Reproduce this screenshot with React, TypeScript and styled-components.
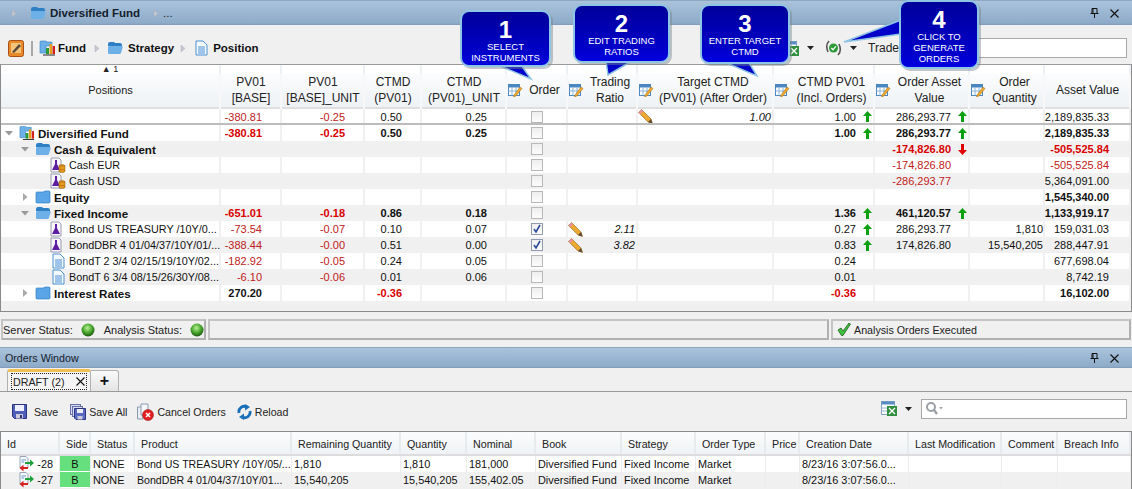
import React from "react";
import styled, { createGlobalStyle } from "styled-components";

const GlobalStyle = createGlobalStyle`
	html, body {
		margin: 0;
		padding: 0;
		background: #f0f0f0;
	}
	body {
		font-family: "Liberation Sans", Arial, sans-serif;
		font-size: 11px;
		color: #111;
	}
`;

const Page = styled.div`
	position: relative;
	width: 1132px;
	height: 489px;
	overflow: hidden;
	display: flex;
	flex-direction: column;
	background: #f0f0f0;
`;

/* ---------- icons ---------- */

const FolderOpen = () => (
	<svg width="16" height="14" viewBox="0 0 16 14">
		<path d="M1 3 Q1 1 3 1 H7 L8 2 H13 Q15 2 15 4 V5 H1Z" fill="#2f7fc4" />
		<path d="M1 12 V6 Q1 5 3 5 H15 Q16 5 15.6 6.5 L14 12 Q13.6 13 12.5 13 H2 Q1 13 1 12Z" fill="#6db0e8" />
	</svg>
);

const FolderClosed = () => (
	<svg width="16" height="14" viewBox="0 0 16 14">
		<path d="M1 3 Q1 2 2 2 H8 L10 1 H14 Q15 1 15 2 V12 Q15 13 14 13 H2 Q1 13 1 12Z" fill="#5aa5e6" stroke="#2f7fc4" strokeWidth="0.7" />
	</svg>
);

const FundIcon = () => (
	<svg width="17" height="16" viewBox="0 0 17 16">
		<path d="M1 2 Q1 1 2 1 H7 L8 2 H13 V6 H7 V13 H1Z" fill="#6db0e8" stroke="#2f7fc4" strokeWidth="0.6" />
		<rect x="7" y="8" width="3" height="6" fill="#2c9a3a" />
		<rect x="10.5" y="4" width="2.5" height="10" fill="#e6a020" />
		<rect x="13.5" y="6" width="2.5" height="8" fill="#d02020" />
		<rect x="4" y="14.5" width="12" height="1" fill="#222" />
	</svg>
);

const DocIcon = () => (
	<svg width="13" height="16" viewBox="0 0 13 16">
		<path d="M1 1 H8 L12 5 V15 H1Z" fill="#f4f9ff" stroke="#4a90d0" />
		<path d="M3 7 H10 M3 9 H10 M3 11 H10 M3 13 H10" stroke="#4a90d0" />
	</svg>
);

const FlaskDoc = ({ coins }: { coins?: boolean }) => (
	<svg width="16" height="16" viewBox="0 0 16 16">
		<path d="M1 1 H9 L11 3 V15 H1Z" fill="#f6f6fb" stroke="#9a9ab0" />
		<path d="M5 3 H7 V7 L10 13 H2 L5 7Z" fill="#5b1fa0" />
		{coins && (
			<g fill="#e89a20" stroke="#8a5a10" strokeWidth="0.5">
				<ellipse cx="12" cy="9" rx="3" ry="1.5" />
				<rect x="9" y="9" width="6" height="5" />
				<ellipse cx="12" cy="14" rx="3" ry="1.5" />
			</g>
		)}
	</svg>
);

const Expander = ({ open }: { open?: boolean }) => (
	<svg width="8" height="8" viewBox="0 0 8 8">
		{open ? <path d="M0 2 H8 L4 6.5Z" fill="#999" /> : <path d="M2 0 V8 L6.5 4Z" fill="#aaa" />}
	</svg>
);

const Chevron = () => (
	<svg width="6" height="9" viewBox="0 0 6 9">
		<path d="M1 1 V8 L5 4.5Z" fill="#c4c8cc" stroke="#aab" strokeWidth="0.4" />
	</svg>
);

const Caret = () => (
	<svg width="7" height="4" viewBox="0 0 7 4">
		<path d="M0 0 H7 L3.5 4Z" fill="#222" />
	</svg>
);

const Pencil = () => (
	<svg width="15" height="15" viewBox="0 0 15 15">
		<path d="M0.5 3.5 L3.5 0.5 L13 10 L14.5 14.5 L10 13Z" fill="#eda832" stroke="#8a6420" strokeWidth="0.6" />
		<path d="M0.5 3.5 L3.5 0.5 L5.2 2.2 L2.2 5.2Z" fill="#ec8f9f" />
		<path d="M13 10 L14.5 14.5 L10 13Z" fill="#5a4a30" />
	</svg>
);

const EditColumn = () => (
	<svg width="15" height="14" viewBox="0 0 15 14">
		<rect x="0.5" y="1.5" width="11" height="11" fill="#fff" stroke="#4a86c0" />
		<rect x="0.5" y="1.5" width="11" height="3" fill="#4a86c0" />
		<path d="M0.5 8 H11.5 M4 4.5 V12.5 M8 4.5 V12.5" stroke="#8ab4da" />
		<path d="M6 12 L12 4 L14 5.5 L8 13 L5.5 14Z" fill="#eda832" stroke="#a06a10" strokeWidth="0.5" />
	</svg>
);

const Arrow = ({ down }: { down?: boolean }) => (
	<svg width="9" height="11" viewBox="0 0 9 11">
		<path
			d={down ? "M3 0 H6 V6 H9 L4.5 11 L0 6 H3Z" : "M4.5 0 L9 5 H6 V11 H3 V5 H0Z"}
			fill={down ? "#e00000" : "#0aa010"}
		/>
	</svg>
);

const ExcelIcon = () => (
	<svg width="16" height="17" viewBox="0 0 16 17">
		<rect x="0.5" y="1.5" width="13" height="13" fill="#fff" stroke="#8aa4c4" />
		<rect x="0.5" y="1.5" width="13" height="3" fill="#5a8cc4" />
		<path d="M1 8 H6 M1 11 H6" stroke="#9ab4d4" />
		<rect x="6" y="6" width="10" height="10" fill="#2f8f3f" />
		<path d="M8 8 L14 14 M14 8 L8 14" stroke="#fff" strokeWidth="1.4" />
	</svg>
);

const SyncCheck = () => (
	<svg width="17" height="16" viewBox="0 0 17 16">
		<path d="M4 1 Q0 5 3 12" fill="none" stroke="#555" strokeWidth="1.6" />
		<path d="M13 15 Q17 11 14 4" fill="none" stroke="#555" strokeWidth="1.6" />
		<circle cx="8.5" cy="8" r="4.5" fill="#2e9a3a" />
		<path d="M6.3 8 L8 9.8 L10.8 6.4" fill="none" stroke="#fff" strokeWidth="1.3" />
	</svg>
);

const Lens = () => (
	<svg width="18" height="13" viewBox="0 0 18 13">
		<circle cx="6" cy="5" r="4" fill="none" stroke="#9aa0a6" strokeWidth="2" />
		<path d="M9 8 L12 12" stroke="#9aa0a6" strokeWidth="2.4" />
		<path d="M14 5 H18 L16 7.5Z" fill="#aaa" />
	</svg>
);

const PaintIcon = () => (
	<svg width="16" height="17" viewBox="0 0 16 17">
		<rect x="0.5" y="0.5" width="15" height="16" rx="2" fill="#e98a2a" stroke="#a8501a" />
		<rect x="3" y="3" width="10" height="10" fill="#f3c37a" />
		<path d="M4 12 L11 4 L13 6 L6 13Z" fill="#5a4a3a" />
	</svg>
);

const LedCircle = () => (
	<svg width="14" height="14" viewBox="0 0 14 14">
		<defs>
			<radialGradient id="led" cx="45%" cy="35%" r="65%">
				<stop offset="0%" stopColor="#b8f09a" />
				<stop offset="55%" stopColor="#4aa82e" />
				<stop offset="100%" stopColor="#1c5a12" />
			</radialGradient>
		</defs>
		<circle cx="7" cy="7" r="6.5" fill="url(#led)" />
	</svg>
);

const CheckMark = () => (
	<svg width="14" height="13" viewBox="0 0 14 13">
		<path d="M1 7 L4 5 L6 8 L12 0 L13.5 1 L6 12.5 L4.5 12.5Z" fill="#3fc23f" stroke="#1c5a1c" strokeWidth="0.8" />
	</svg>
);

const PinIcon = () => (
	<svg width="9" height="10" viewBox="0 0 9 10">
		<path d="M2 0.5 H7 V5.5 H2Z M3 0.5 V5.5 M0.5 5.5 H8.5 M4.5 5.5 V10" fill="none" stroke="#111" />
	</svg>
);

const CloseIcon = () => (
	<svg width="9" height="9" viewBox="0 0 9 9">
		<path d="M0.5 0.5 L8.5 8.5 M8.5 0.5 L0.5 8.5" stroke="#111" strokeWidth="1.1" />
	</svg>
);

const Floppy = () => (
	<svg width="15" height="15" viewBox="0 0 15 15">
		<path d="M0.5 0.5 H14.5 V14.5 H2.5 L0.5 12.5Z" fill="#4f5fb8" stroke="#2c3480" />
		<rect x="3" y="1" width="9" height="6" fill="#eef" />
		<rect x="4" y="10" width="7" height="4.5" fill="#ccd" />
		<rect x="8" y="11" width="2" height="3" fill="#336" />
	</svg>
);

const FloppyStack = () => (
	<svg width="16" height="16" viewBox="0 0 16 16">
		<rect x="0.5" y="0.5" width="10" height="10" fill="#d8dcf0" stroke="#6670a8" />
		<rect x="2.5" y="2.5" width="10" height="10" fill="#d8dcf0" stroke="#6670a8" />
		<path d="M4.5 4.5 H15.5 V15.5 H6 L4.5 14Z" fill="#5a6ac0" stroke="#2c3480" />
		<rect x="7" y="5" width="6" height="4" fill="#eef" />
		<rect x="7.5" y="12" width="5" height="3.5" fill="#ccd" />
	</svg>
);

const CancelDocs = () => (
	<svg width="17" height="18" viewBox="0 0 17 18">
		<path d="M0.5 4 H6 V16 H0.5Z" fill="#e8eef4" stroke="#8a9aac" />
		<path d="M4 1 H11 V12 H4Z" fill="#f4f7fa" stroke="#8a9aac" />
		<circle cx="11" cy="12" r="5.5" fill="#e02020" stroke="#901010" strokeWidth="0.5" />
		<path d="M9 10 L13 14 M13 10 L9 14" stroke="#fff" strokeWidth="1.5" />
	</svg>
);

const ReloadIcon = () => (
	<svg width="15" height="16" viewBox="0 0 15 16">
		<path d="M2 9 A5.5 5.5 0 0 1 10 3" fill="none" stroke="#1a70b8" strokeWidth="2.8" />
		<path d="M8 0 L13 3 L8 6.5Z" fill="#1a70b8" />
		<path d="M13 7 A5.5 5.5 0 0 1 5 13" fill="none" stroke="#1a70b8" strokeWidth="2.8" />
		<path d="M7 9.5 L2 13 L7 16Z" fill="#1a70b8" />
	</svg>
);

const OrderArrows = () => (
	<svg width="15" height="16" viewBox="0 0 15 16">
		<path d="M1 0.5 H7 L9 2.5 V12 H1Z" fill="#f4f7fa" stroke="#9aa6b4" />
		<path d="M2.5 4 H7 M2.5 6 H5" stroke="#6a9ad0" />
		<path d="M6 6 H11 V3.5 L15 7 L11 10.5 V8 H6Z" fill="#1ea03a" />
		<path d="M9 11 H4.5 V8.8 L0.5 12 L4.5 15.5 V13 H9Z" fill="#d82020" />
	</svg>
);

/* ---------- window chrome ---------- */

const TitleBar = styled.div<{ $height: number }>`
	height: ${(p) => p.$height}px;
	flex: none;
	display: flex;
	align-items: center;
	padding: 0 13px 0 5px;
	box-sizing: border-box;
	background: linear-gradient(#aac3dc, #8eabc9 92%, #7c98b6);
	border-top: 1px solid #8ea8c4;
`;

const TitleText = styled.span`
	font-size: 11.5px;
	color: #14202c;
`;

const OrdersTitle = styled(TitleText)`
	font-size: 10.7px;
`;

const TitleName = styled(TitleText)`
	font-weight: bold;
	margin-left: 4px;
`;

const Crumb = styled.span<{ $gap?: number }>`
	display: inline-flex;
	align-items: center;
	margin-left: ${(p) => p.$gap ?? 0}px;
`;

const WindowButtons = styled.div`
	margin-left: auto;
	display: flex;
	align-items: center;
	gap: 11px;
`;

const Toolbar = styled.div<{ $height: number; $top?: number }>`
	height: ${(p) => p.$height}px;
	flex: none;
	display: flex;
	align-items: center;
	padding: ${(p) => p.$top ?? 0}px 5px 0 8px;
	box-sizing: border-box;
	background: #f0f0f0;
`;

const Breadcrumb = styled.span<{ $left: number }>`
	margin-left: ${(p) => p.$left}px;
	font-size: 11.5px;
	font-weight: bold;
	color: #111;
`;

const Divider = styled.span`
	width: 2px;
	height: 15px;
	margin: 0 6px 0 7px;
	background: #a8a8a8;
`;

const ToolRight = styled.div<{ $lift?: number }>`
	margin-left: auto;
	margin-bottom: ${(p) => p.$lift ?? 0}px;
	display: flex;
	align-items: center;
`;

const SearchBox = styled.div<{ $width: number; $left: number }>`
	width: ${(p) => p.$width}px;
	height: 20px;
	margin-left: ${(p) => p.$left}px;
	box-sizing: border-box;
	border: 1px solid #a8a8a8;
	background: #fff;
	display: flex;
	align-items: center;
	padding-left: 3px;
`;

const ToolAction = styled.span<{ $gap: number; $left: number }>`
	display: inline-flex;
	align-items: center;
	gap: ${(p) => p.$gap}px;
	margin-left: ${(p) => p.$left}px;
	font-size: 10.6px;
	color: #222;
`;

const TradeLabel = styled.span`
	margin-left: 11px;
	font-size: 12px;
	color: #222;
`;

/* ---------- positions table ---------- */

const positionColumns = "220px 61px 83px 57px 85px 61px 70px 136px 101px 95px 75px 86px";

const TreeTable = styled.div`
	height: 248px;
	flex: none;
	box-sizing: border-box;
	border: 1px solid #8a8a8a;
	border-top-color: #9a9a9a;
	background: #f0f0f0;
	overflow: hidden;
`;

const GridRow = styled.div<{ $alt?: boolean; $height: number }>`
	display: grid;
	grid-template-columns: ${positionColumns};
	height: ${(p) => p.$height}px;
	background: ${(p) => (p.$alt ? "#f0f0f0" : "#fff")};
`;

const SortCell = styled.div`
	border-right: 2px solid #eef1f4;
	font-size: 9px;
	line-height: 9px;
	text-align: center;
	color: #222;
`;

const HeaderRow = styled(GridRow)`
	background: linear-gradient(#fbfcfd, #eef2f5);
	border-bottom: 2px solid #dfdfdf;
	box-sizing: content-box;
`;

const HeaderCell = styled.div`
	display: flex;
	align-items: center;
	border-right: 2px solid #f8f8f8;
	padding: 0 0 6px 1px;
	font-size: 12px;
	line-height: 16px;
	color: #222;
`;

const HeaderLabel = styled.div`
	flex: 1;
	text-align: center;
	white-space: pre-line;
`;

const PositionsLabel = styled(HeaderLabel)`
	font-size: 11px;
`;

const Cell = styled.div<{ $bold?: boolean; $red?: boolean; $italic?: boolean }>`
	display: flex;
	align-items: center;
	justify-content: flex-end;
	border-right: 2px solid #f0f0f0;
	font-size: 11px;
	font-weight: ${(p) => (p.$bold ? "bold" : "normal")};
	font-style: ${(p) => (p.$italic ? "italic" : "normal")};
	color: ${(p) => (p.$red ? (p.$bold ? "#d80000" : "#c02020") : "#111")};
	white-space: nowrap;
`;

const NumberCell = styled(Cell)`
	padding-right: 18px;
`;

const ArrowSlot = styled.span`
	display: inline-flex;
	justify-content: center;
	width: 12px;
	margin-left: 5px;
`;

const AssetCell = styled(Cell)`
	padding-right: 20px;
`;

const EditCell = styled(Cell)`
	justify-content: space-between;
	padding-right: 1px;
`;

const CheckCell = styled(Cell)`
	justify-content: center;
`;

const TreeCell = styled(Cell)<{ $indent: number }>`
	justify-content: flex-start;
	padding-left: ${(p) => p.$indent}px;
	font-size: ${(p) => (p.$bold ? 11.6 : 10.8)}px;
`;

const TreeExpander = styled.span`
	display: inline-flex;
	width: 14px;
`;

const TreeIconSlot = styled.span`
	display: inline-flex;
	justify-content: center;
	width: 16px;
	margin-right: 3px;
`;

const CheckBox = styled.span<{ $checked?: boolean }>`
	display: inline-flex;
	align-items: center;
	justify-content: center;
	width: 12px;
	height: 12px;
	box-sizing: border-box;
	border: 1px solid ${(p) => (p.$checked ? "#8f9ab0" : "#b8b8b8")};
	background: linear-gradient(#eeeeee, #fdfdfd);
`;

const RowSeparator = styled.div`
	height: 2px;
	margin-top: -1px;
	background: #bcbcbc;
	position: relative;
`;

/* ---------- status bar ---------- */

const StatusBar = styled.div`
	height: 21px;
	margin: 7px 1px 0 1px;
	flex: none;
	display: flex;
	gap: 2px;
`;

const StatusPanel = styled.div<{ $width?: number }>`
	${(p) => (p.$width ? `width: ${p.$width}px;` : "flex: 1;")}
	box-sizing: border-box;
	border: 2px solid #b4b4b4;
	border-color: #c4c4c4 #b0b0b0 #b0b0b0 #c4c4c4;
	display: flex;
	align-items: center;
	font-size: 10.7px;
	white-space: nowrap;
	color: #222;
`;

const StatusText = styled.span<{ $left: number }>`
	margin-left: ${(p) => p.$left}px;
	margin-right: 8px;
	font-size: 11px;
`;

const StatusCheck = styled.span`
	display: inline-flex;
	margin: 0 3px 0 4px;
`;

/* ---------- orders ---------- */

const OrdersHead = styled.div`
	margin-top: 7px;
	flex: none;
`;

const TabStrip = styled.div`
	height: 24px;
	flex: none;
	box-sizing: border-box;
	padding: 1px 0 0 7px;
	display: flex;
	align-items: flex-end;
	border-bottom: 1px solid #9a9a9a;
`;

const DraftTab = styled.div`
	width: 84px;
	height: 22px;
	box-sizing: border-box;
	border: 1px solid #b0b0b0;
	border-top: 3px solid #f0c050;
	border-bottom: none;
	border-radius: 3px 3px 0 0;
	background: #f4f4f4;
	padding: 1px 3px;
`;

const TabFocus = styled.div`
	height: 15px;
	border: 1px dotted #222;
	padding: 0 1px 0 1px;
	display: flex;
	align-items: center;
	justify-content: space-between;
	font-size: 10.7px;
	color: #222;
`;

const AddTab = styled.div`
	width: 28px;
	height: 21px;
	box-sizing: border-box;
	border: 1px solid #b0b0b0;
	border-bottom: none;
	border-left: none;
	border-radius: 0 3px 0 0;
	background: linear-gradient(#fafafa, #e4e4e4);
	display: flex;
	align-items: center;
	justify-content: center;
	font-size: 16px;
	font-weight: bold;
	color: #111;
`;

const orderColumns = "59px 31px 44px 157px 109px 66px 69px 86px 74px 70px 34px 109px 93px 56px 73px";

const OrdersTable = styled.div`
	flex: 1;
	box-sizing: border-box;
	border: 1px solid #8a8a8a;
	border-bottom: none;
	overflow: hidden;
`;

const OrderRow = styled.div<{ $alt?: boolean }>`
	display: grid;
	grid-template-columns: ${orderColumns};
	height: 16px;
	background: ${(p) => (p.$alt ? "#f0f0f0" : "#fff")};
`;

const OrderHeader = styled(OrderRow)`
	height: 22px;
	background: linear-gradient(#fbfcfd, #f0f3f5);
	border-bottom: 2px solid #dcdcdc;
	box-sizing: content-box;
`;

const OrderHeadCell = styled.div`
	display: flex;
	align-items: center;
	padding: 2px 0 0 6px;
	border-right: 2px solid #e8ebee;
	font-size: 10.7px;
	color: #222;
	white-space: nowrap;
`;

const OrderCell = styled.div`
	display: flex;
	align-items: center;
	padding-left: 2px;
	border-right: 1px solid #ececec;
	font-size: 10.9px;
	color: #111;
	white-space: nowrap;
	overflow: hidden;
`;

const ProductCell = styled(OrderCell)`
	font-size: 10.6px;
`;

const IdCell = styled(OrderCell)`
	justify-content: flex-end;
	gap: 3px;
	padding-right: 6px;
`;

const SideCell = styled(OrderCell)`
	justify-content: center;
	padding-left: 0;
	background: #66e07f;
	border-bottom: 1px solid #fff;
`;

/* ---------- callouts ---------- */

const Callout = styled.div<{ $x: number; $y: number; $w: number; $h: number }>`
	position: absolute;
	left: ${(p) => p.$x}px;
	top: ${(p) => p.$y}px;
	width: ${(p) => p.$w}px;
	height: ${(p) => p.$h}px;
	box-sizing: border-box;
	border-radius: 9px;
	border: 2px solid #8ec4e4;
	background: linear-gradient(#00009a, #0000cc 80%, #0000e0);
	box-shadow: 2px 2px 0 rgba(120, 130, 140, 0.45);
	color: #fff;
	text-align: center;
	padding-top: 8px;
	z-index: 3;
`;

const CalloutNumber = styled.div`
	font-size: 24px;
	line-height: 20px;
	font-weight: bold;
`;

const CalloutText = styled.div`
	margin-top: 1px;
	font-size: 9.5px;
	line-height: 11px;
	white-space: pre-line;
`;

const CalloutTail = styled.svg<{ $x: number; $y: number }>`
	position: absolute;
	left: ${(p) => p.$x}px;
	top: ${(p) => p.$y}px;
	z-index: 2;
	overflow: visible;
`;

/* ---------- data ---------- */

type Kind = "fund" | "open" | "closed" | "coins" | "flask" | "doc";

interface Position {
	label: string;
	level: number;
	kind?: Kind;
	bold?: boolean;
	expander?: "open" | "closed";
	pv?: string;
	pvUnit?: string;
	ctmd?: string;
	ctmdUnit?: string;
	checked?: boolean;
	ratio?: string;
	target?: string;
	ctmdPv?: string;
	ctmdArrow?: boolean;
	asset?: string;
	assetArrow?: "up" | "down";
	quantity?: string;
	value?: string;
}

const summary: Position = { label: "", level: 0, pv: "-380.81", pvUnit: "-0.25", ctmd: "0.50", ctmdUnit: "0.25", target: "1.00", ctmdPv: "1.00", ctmdArrow: true, asset: "286,293.77", assetArrow: "up", value: "2,189,835.33" };

const positions: Position[] = [
	{ label: "Diversified Fund", level: 0, kind: "fund", bold: true, expander: "open", pv: "-380.81", pvUnit: "-0.25", ctmd: "0.50", ctmdUnit: "0.25", ctmdPv: "1.00", ctmdArrow: true, asset: "286,293.77", assetArrow: "up", value: "2,189,835.33" },
	{ label: "Cash & Equivalent", level: 1, kind: "open", bold: true, expander: "open", asset: "-174,826.80", assetArrow: "down", value: "-505,525.84" },
	{ label: "Cash EUR", level: 2, kind: "coins", asset: "-174,826.80", value: "-505,525.84" },
	{ label: "Cash USD", level: 2, kind: "coins", asset: "-286,293.77", value: "5,364,091.00" },
	{ label: "Equity", level: 1, kind: "closed", bold: true, expander: "closed", value: "1,545,340.00" },
	{ label: "Fixed Income", level: 1, kind: "open", bold: true, expander: "open", pv: "-651.01", pvUnit: "-0.18", ctmd: "0.86", ctmdUnit: "0.18", ctmdPv: "1.36", ctmdArrow: true, asset: "461,120.57", assetArrow: "up", value: "1,133,919.17" },
	{ label: "Bond US TREASURY /10Y/0...", level: 2, kind: "flask", pv: "-73.54", pvUnit: "-0.07", ctmd: "0.10", ctmdUnit: "0.07", checked: true, ratio: "2.11", ctmdPv: "0.27", ctmdArrow: true, asset: "286,293.77", quantity: "1,810", value: "159,031.03" },
	{ label: "BondDBR 4 01/04/37/10Y/01/...", level: 2, kind: "flask", pv: "-388.44", pvUnit: "-0.00", ctmd: "0.51", ctmdUnit: "0.00", checked: true, ratio: "3.82", ctmdPv: "0.83", ctmdArrow: true, asset: "174,826.80", quantity: "15,540,205", value: "288,447.91" },
	{ label: "BondT 2 3/4 02/15/19/10Y/02...", level: 2, kind: "doc", pv: "-182.92", pvUnit: "-0.05", ctmd: "0.24", ctmdUnit: "0.05", ctmdPv: "0.24", value: "677,698.04" },
	{ label: "BondT 6 3/4 08/15/26/30Y/08...", level: 2, kind: "doc", pv: "-6.10", pvUnit: "-0.06", ctmd: "0.01", ctmdUnit: "0.06", ctmdPv: "0.01", value: "8,742.19" },
	{ label: "Interest Rates", level: 1, kind: "closed", bold: true, expander: "closed", pv: "270.20", ctmd: "-0.36", ctmdPv: "-0.36", value: "16,102.00" },
];

const columnHeads: { label: string; edit?: boolean }[] = [
	{ label: "Positions" },
	{ label: "PV01\n[BASE]" },
	{ label: "PV01\n[BASE]_UNIT" },
	{ label: "CTMD\n(PV01)" },
	{ label: "CTMD\n(PV01)_UNIT" },
	{ label: "Order", edit: true },
	{ label: "Trading\nRatio", edit: true },
	{ label: "Target CTMD\n(PV01) (After Order)", edit: true },
	{ label: "CTMD PV01\n(Incl. Orders)", edit: true },
	{ label: "Order Asset\nValue", edit: true },
	{ label: "Order\nQuantity", edit: true },
	{ label: "Asset Value" },
];

const orderHeads = ["Id", "Side", "Status", "Product", "Remaining Quantity", "Quantity", "Nominal", "Book", "Strategy", "Order Type", "Price", "Creation Date", "Last Modification", "Comment", "Breach Info"];

const orders = [
	["-28", "B", "NONE", "Bond US TREASURY /10Y/05/...", "1,810", "1,810", "181,000", "Diversified Fund", "Fixed Income", "Market", "", "8/23/16 3:07:56.0...", "", "", ""],
	["-27", "B", "NONE", "BondDBR 4 01/04/37/10Y/01...", "15,540,205", "15,540,205", "155,402.05", "Diversified Fund", "Fixed Income", "Market", "", "8/23/16 3:07:56.0...", "", "", ""],
];

const treeIcons: Record<Kind, React.ReactNode> = {
	fund: <FundIcon />,
	open: <FolderOpen />,
	closed: <FolderClosed />,
	coins: <FlaskDoc coins />,
	flask: <FlaskDoc />,
	doc: <DocIcon />,
};

const indents = [4, 20, 49];

const isNegative = (v?: string) => Boolean(v && v.startsWith("-"));

const PositionRow: React.FC<{ row: Position; alt: boolean; top?: boolean }> = ({ row, alt, top }) => (
	<GridRow $alt={alt} $height={top ? 15 : 16}>
		<TreeCell $indent={indents[row.level]} $bold={row.bold}>
			{row.expander && (
				<TreeExpander>
					<Expander open={row.expander === "open"} />
				</TreeExpander>
			)}
			{row.kind && <TreeIconSlot>{treeIcons[row.kind]}</TreeIconSlot>}
			{row.label}
		</TreeCell>
		<NumberCell $bold={row.bold} $red={isNegative(row.pv)}>{row.pv}</NumberCell>
		<NumberCell $bold={row.bold} $red={isNegative(row.pvUnit)}>{row.pvUnit}</NumberCell>
		<NumberCell $bold={row.bold} $red={isNegative(row.ctmd)}>{row.ctmd}</NumberCell>
		<NumberCell $bold={row.bold} $red={isNegative(row.ctmdUnit)}>{row.ctmdUnit}</NumberCell>
		<CheckCell>
			<CheckBox $checked={row.checked}>
				{row.checked && (
					<svg width="10" height="10" viewBox="0 0 10 10">
						<path d="M2 5 L4 8 L8 1" fill="none" stroke="#2c4c9c" strokeWidth="1.6" />
					</svg>
				)}
			</CheckBox>
		</CheckCell>
		<EditCell $italic>
			{row.ratio && <Pencil />}
			{row.ratio}
		</EditCell>
		<EditCell $italic>
			{row.target && <Pencil />}
			{row.target}
		</EditCell>
		<Cell $bold={row.bold} $red={isNegative(row.ctmdPv)}>
			{row.ctmdPv}
			<ArrowSlot>{row.ctmdArrow && <Arrow />}</ArrowSlot>
		</Cell>
		<Cell $bold={row.bold} $red={isNegative(row.asset)}>
			{row.asset}
			<ArrowSlot>{row.assetArrow && <Arrow down={row.assetArrow === "down"} />}</ArrowSlot>
		</Cell>
		<Cell>{row.quantity}</Cell>
		<AssetCell $bold={row.bold} $red={isNegative(row.value)}>{row.value}</AssetCell>
	</GridRow>
);

const App: React.FC = () => (
	<Page>
		<GlobalStyle />

		<TitleBar $height={25}>
			<Crumb $gap={6}><Chevron /></Crumb>
			<Crumb $gap={13}><FolderOpen /></Crumb>
			<TitleName>Diversified Fund</TitleName>
			<Crumb $gap={13}><Chevron /></Crumb>
			<Crumb $gap={4}><TitleText>...</TitleText></Crumb>
			<WindowButtons>
				<PinIcon />
				<CloseIcon />
			</WindowButtons>
		</TitleBar>

		<Toolbar $height={39} $top={7}>
			<PaintIcon />
			<Divider />
			<FundIcon />
			<Breadcrumb $left={2}>Fund</Breadcrumb>
			<Crumb $gap={8}><Chevron /></Crumb>
			<Crumb $gap={7}><FolderOpen /></Crumb>
			<Breadcrumb $left={5}>Strategy</Breadcrumb>
			<Crumb $gap={6}><Chevron /></Crumb>
			<Crumb $gap={9}><DocIcon /></Crumb>
			<Breadcrumb $left={5}>Position</Breadcrumb>
			<ToolRight>
				<ExcelIcon />
				<Crumb $gap={8}><Caret /></Crumb>
				<Crumb $gap={11}><SyncCheck /></Crumb>
				<Crumb $gap={8}><Caret /></Crumb>
				<TradeLabel>Trade</TradeLabel>
				<SearchBox $width={187} $left={41} />
			</ToolRight>
		</Toolbar>

		<TreeTable>
			<GridRow $height={9}>
				{columnHeads.map((c, i) => (
					<SortCell key={c.label}>{i === 0 ? "▲ 1" : ""}</SortCell>
				))}
			</GridRow>
			<HeaderRow $height={33}>
				{columnHeads.map((c) => (
					<HeaderCell key={c.label}>
						{c.edit && <EditColumn />}
						{c.label === "Positions" ? <PositionsLabel>{c.label}</PositionsLabel> : <HeaderLabel>{c.label}</HeaderLabel>}
					</HeaderCell>
				))}
			</HeaderRow>
			<PositionRow top alt={false} row={summary} />
			<RowSeparator />
			{positions.map((p, i) => (
				<PositionRow key={p.label} row={p} alt={i % 2 === 1} />
			))}
		</TreeTable>

		<StatusBar>
			<StatusPanel $width={205}>
				<StatusText $left={0}>Server Status:</StatusText>
				<LedCircle />
				<StatusText $left={9}>Analysis Status:</StatusText>
				<LedCircle />
			</StatusPanel>
			<StatusPanel />
			<StatusPanel $width={300}>
				<StatusCheck><CheckMark /></StatusCheck>
				Analysis Orders Executed
			</StatusPanel>
		</StatusBar>

		<OrdersHead>
			<TitleBar $height={21}>
				<OrdersTitle>Orders Window</OrdersTitle>
				<WindowButtons>
					<PinIcon />
					<CloseIcon />
				</WindowButtons>
			</TitleBar>
		</OrdersHead>

		<TabStrip>
			<DraftTab>
				<TabFocus>
					DRAFT (2)
					<CloseIcon />
				</TabFocus>
			</DraftTab>
			<AddTab>+</AddTab>
		</TabStrip>

		<Toolbar $height={39}>
			<ToolAction $gap={7} $left={4}><Floppy />Save</ToolAction>
			<ToolAction $gap={3} $left={12}><FloppyStack />Save All</ToolAction>
			<ToolAction $gap={3} $left={10}><CancelDocs />Cancel Orders</ToolAction>
			<ToolAction $gap={3} $left={11}><ReloadIcon />Reload</ToolAction>
			<ToolRight $lift={6}>
				<ExcelIcon />
				<Crumb $gap={8}><Caret /></Crumb>
				<SearchBox $width={206} $left={9}><Lens /></SearchBox>
			</ToolRight>
		</Toolbar>

		<OrdersTable>
			<OrderHeader>
				{orderHeads.map((h) => (
					<OrderHeadCell key={h}>{h}</OrderHeadCell>
				))}
			</OrderHeader>
			{orders.map((o, i) => (
				<OrderRow key={o[0]} $alt={i === 1}>
					<IdCell><OrderArrows />{o[0]}</IdCell>
					<SideCell>{o[1]}</SideCell>
					<OrderCell>{o[2]}</OrderCell>
					<ProductCell>{o[3]}</ProductCell>
					{o.slice(4).map((v, j) => (
						<OrderCell key={j}>{v}</OrderCell>
					))}
				</OrderRow>
			))}
		</OrdersTable>

		<CalloutTail $x={497} $y={60} width="36" height="20">
			<path d="M1 5 L34 19 L24 5Z" fill="#0000c8" stroke="#8ec4e4" strokeWidth="1.5" />
		</CalloutTail>
		<Callout $x={460} $y={10} $w={91} $h={57}>
			<CalloutNumber>1</CalloutNumber>
			<CalloutText>{"SELECT\nINSTRUMENTS"}</CalloutText>
		</Callout>

		<CalloutTail $x={604} $y={58} width="30" height="18">
			<path d="M2 3 L4 17 L28 3Z" fill="#0000c8" stroke="#8ec4e4" strokeWidth="1.5" />
		</CalloutTail>
		<Callout $x={573} $y={4} $w={97} $h={59}>
			<CalloutNumber>2</CalloutNumber>
			<CalloutText>{"EDIT TRADING\nRATIOS"}</CalloutText>
		</Callout>

		<CalloutTail $x={720} $y={58} width="38" height="20">
			<path d="M2 3 L37 18 L28 3Z" fill="#0000c8" stroke="#8ec4e4" strokeWidth="1.5" />
		</CalloutTail>
		<Callout $x={700} $y={4} $w={90} $h={60}>
			<CalloutNumber>3</CalloutNumber>
			<CalloutText>{"ENTER TARGET\nCTMD"}</CalloutText>
		</Callout>

		<CalloutTail $x={843} $y={18} width="60" height="26">
			<path d="M58 2 L1 24 L58 16Z" fill="#0000c8" stroke="#8ec4e4" strokeWidth="1.5" />
		</CalloutTail>
		<Callout $x={899} $y={0} $w={80} $h={69}>
			<CalloutNumber>4</CalloutNumber>
			<CalloutText>{"CLICK TO\nGENERATE\nORDERS"}</CalloutText>
		</Callout>
	</Page>
);

export default App;
